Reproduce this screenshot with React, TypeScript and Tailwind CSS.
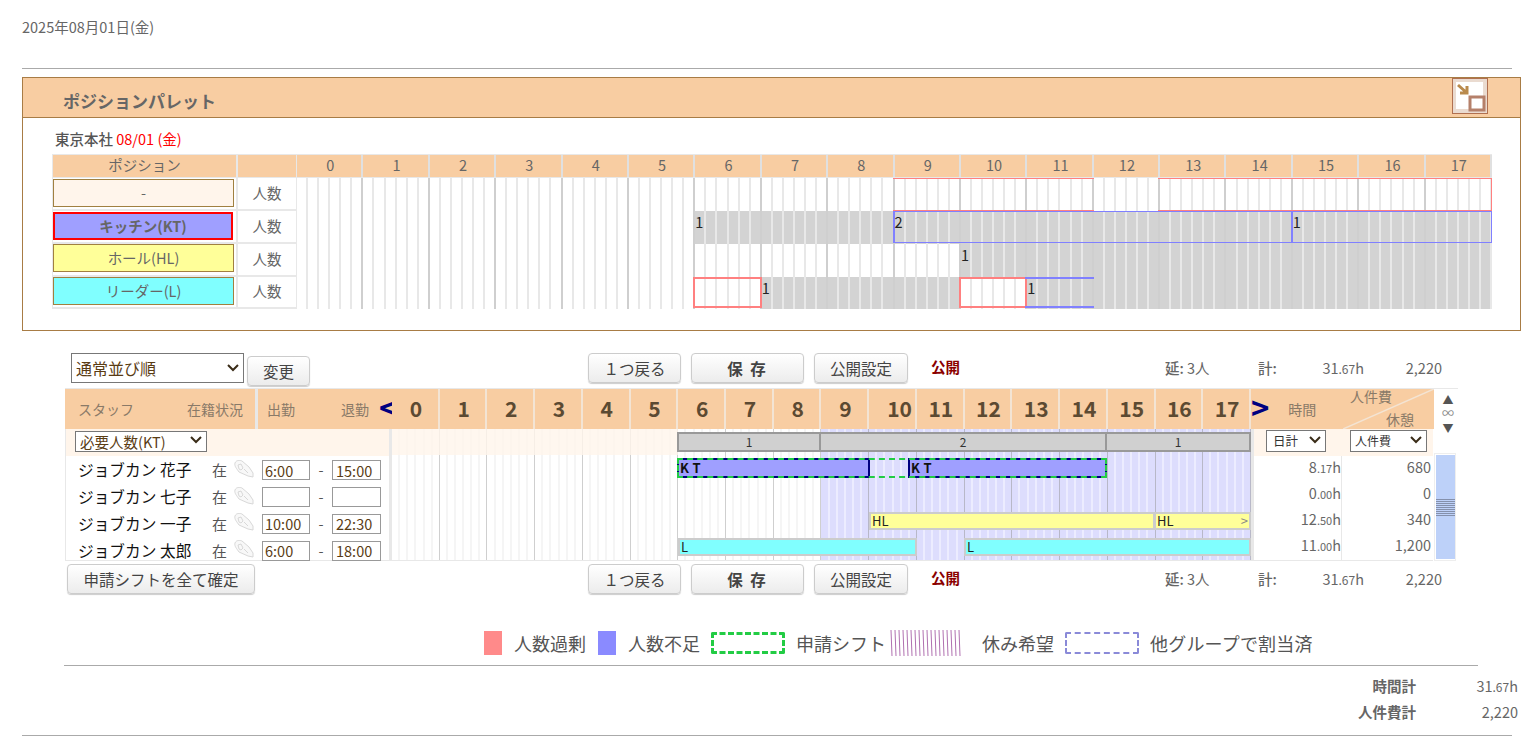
import type { ReactNode } from "react";

const hours = Array.from({ length: 18 }, (_, i) => i);
const slots = [0, 1, 2, 3, 4];

type PaletteCell = {
  gray?: boolean;
  line?: "red" | "blue" | "box" | "blueThick";
  left?: boolean;
  right?: boolean;
  n?: string;
};

const blank: PaletteCell = {};
const gray: PaletteCell = { gray: true };
const redLine: PaletteCell = { line: "red" };
const blueGray: PaletteCell = { gray: true, line: "blue" };

const paletteRows: { label: string; cls: string; cells: PaletteCell[] }[] = [
  {
    label: "-",
    cls: "mt-[1px] w-[181px] bg-[#fff5eb] border border-[#a08040] font-normal",
    cells: [
      ...Array(9).fill(blank),
      redLine,
      redLine,
      redLine,
      blank,
      redLine,
      redLine,
      redLine,
      redLine,
      { line: "red", right: true },
    ],
  },
  {
    label: "キッチン(KT)",
    cls: "mt-[1px] w-[180px] bg-[#9f9fff] border-2 border-[#ff0000] font-bold",
    cells: [
      ...Array(6).fill(blank),
      { gray: true, n: "1" },
      gray,
      gray,
      { gray: true, line: "blue", left: true, n: "2" },
      blueGray,
      blueGray,
      blueGray,
      blueGray,
      blueGray,
      { gray: true, line: "blue", left: true, n: "1" },
      blueGray,
      { gray: true, line: "blue", right: true },
    ],
  },
  {
    label: "ホール(HL)",
    cls: "w-[181px] bg-[#ffff99] border border-[#a08040] font-normal",
    cells: [...Array(10).fill(blank), { gray: true, n: "1" }, ...Array(7).fill(gray)],
  },
  {
    label: "リーダー(L)",
    cls: "w-[181px] bg-[#80ffff] border border-[#a08040] font-normal",
    cells: [
      ...Array(6).fill(blank),
      { line: "box" },
      { gray: true, n: "1" },
      gray,
      gray,
      { line: "box" },
      { gray: true, line: "blueThick", n: "1" },
      ...Array(6).fill(gray),
    ],
  },
];

const staff = [
  { name: "ジョブカン 花子", start: "6:00", end: "15:00", h: "8", m: ".17", cost: "680" },
  { name: "ジョブカン 七子", start: "", end: "", h: "0", m: ".00", cost: "0" },
  { name: "ジョブカン 一子", start: "10:00", end: "22:30", h: "12", m: ".50", cost: "340" },
  { name: "ジョブカン 太郎", start: "6:00", end: "18:00", h: "11", m: ".00", cost: "1,200" },
];

function Hand() {
  return (
    <svg width="20" height="18" viewBox="0 0 20 18" className="mb-[3px] ml-[7px] shrink-0" fill="#f8f8f8" stroke="#d8d8d8" strokeWidth="1">
      <path d="M1 3 C2 0 6 0 8 1 L15 7 L19 13 L19 17 L14 16 L5 12 C3 9 0 6 1 3Z" />
      <path d="M4 5 L7 4 L9 8 L7 10 L5 9 Z M10 9 L14 13" fill="none" />
    </svg>
  );
}

function Select({ label, cls, textCls }: { label: string; cls: string; textCls: string }) {
  return (
    <div className={`relative shrink-0 ${cls}`}>
      <select className={`h-full w-full appearance-none border border-[#777] bg-white ${textCls}`} defaultValue={label}>
        <option value={label}>{label}</option>
      </select>
      <svg width="12" height="8" viewBox="0 0 12 8" className="pointer-events-none absolute right-[5px] top-1/2 -mt-[4px]" fill="none" stroke="#3a2c18" strokeWidth="2">
        <path d="M1 1 L6 6 L11 1" />
      </svg>
    </div>
  );
}

function PaletteHour({ cell, hour }: { cell: PaletteCell; hour: number }) {
  return (
    <div className={`relative flex flex-1 ${cell.gray ? "bg-[#d3d3d3]" : "bg-white"}`}>
      {slots.map((s) => (
        <div key={s} className="flex-1 border-r-2 border-[#e8e8e8]" />
      ))}
      <div className={`flex-1 border-r-2 ${hour === 17 ? "border-[#e8e8e8]" : "border-[#cfcfcf]"}`} />
      {cell.line === "red" && (
        <div className={`absolute -left-[2px] right-0 inset-y-0 border-y border-[#ff8080] ${cell.right ? "border-r" : ""}`} />
      )}
      {cell.line === "blue" && (
        <div className={`absolute -left-[2px] right-0 top-0 bottom-px border-y border-[#8080ff] ${cell.left ? "border-l-2" : ""} ${cell.right ? "border-r" : ""}`} />
      )}
      {cell.line === "blueThick" && <div className="absolute -left-[2px] right-0 top-0 bottom-px border-y-2 border-[#8080ff]" />}
      {cell.line === "box" && <div className="absolute -left-[2px] right-0 top-0 bottom-px border-2 border-[#ff8080]" />}
      {cell.n && (
        <span className="absolute left-0 top-[1px] text-[14.5px] leading-[20px] text-[#222]">{cell.n}</span>
      )}
    </div>
  );
}

function Palette() {
  return (
    <div className="mt-[8px] h-[254px] w-[1499px] border border-[#a87c45]">
      <div className="flex h-[40px] items-center justify-between border-b border-[#a87c45] bg-[#f8cda2] pl-[40px] pr-[32px]">
        <span className="pt-[6px] text-[17px] font-bold text-[#666]">ポジションパレット</span>
        <button className="mb-[3px] h-[36px] w-[36px]">
          <svg width="36" height="36" viewBox="0 0 36 36">
            <rect x="0.5" y="0.5" width="35" height="35" fill="#eadbd0" stroke="#b07050" />
            <rect x="4" y="4" width="27" height="27" fill="#fff" />
            <rect x="18" y="19" width="14" height="13" fill="#fff" stroke="#b5806a" strokeWidth="3" />
            <path d="M6 7 L15 15 M15 8 V15 H8" fill="none" stroke="#b98a4c" strokeWidth="3" />
          </svg>
        </button>
      </div>
      <div className="pl-[29px] pt-[11px]">
        <div className="ml-[3px] h-[25px] text-[14.5px] leading-[20px] font-medium text-[#555]">
          東京本社 <span className="font-normal text-[#ff0000]">08/01 (金)</span>
        </div>
        <div className="w-[1440px]">
          <div className="flex h-[24px] border-y border-[#e8e8e8] text-[14.5px] leading-[20px] text-[#666]">
            <div className="w-[185px] border-x border-[#e8e8e8] bg-[#f8cda2] text-center">ポジション</div>
            <div className="w-[60px] border-x border-[#e8e8e8] bg-[#f8cda2]" />
            {hours.map((h) => (
              <div key={h} className="flex-1 border-r-2 border-[#e0e0e0] bg-[#f8cda2] pl-[2px] text-center">
                {h}
              </div>
            ))}
          </div>
          {paletteRows.map((row, i) => (
            <div key={row.label} className={`flex ${i === 3 ? "h-[32px]" : "h-[33px]"}`}>
              <div className="w-[185px] border-x border-b-2 border-[#e8e8e8]">
                <div className={`flex h-[28px] items-center justify-center text-[14.5px] text-[#666] ${row.cls}`}>
                  {row.label}
                </div>
              </div>
              <div className="flex w-[60px] items-center justify-center border-x border-b-2 border-[#e8e8e8] pb-[2px] text-[14.5px] text-[#666]">
                人数
              </div>
              {row.cells.map((cell, h) => (
                <PaletteHour key={h} cell={cell} hour={h} />
              ))}
            </div>
          ))}
        </div>
      </div>
    </div>
  );
}

function Btn({ children, cls }: { children: ReactNode; cls: string }) {
  return (
    <button className={`h-[30px] shrink-0 rounded-[4px] border border-[#ccc] bg-gradient-to-b from-white to-[#ececec] text-[15.5px] leading-[28px] text-[#444] shadow-[0_1px_1px_rgba(0,0,0,0.2)] ${cls}`}>
      {children}
    </button>
  );
}

function Toolbar({ left }: { left: ReactNode }) {
  return (
    <div className="flex h-[31px] items-start text-[14.5px] text-[#666]">
      <div className="flex w-[524px] shrink-0 items-start">{left}</div>
      <Btn cls="w-[93px]">１つ戻る</Btn>
      <Btn cls="ml-[10px] w-[113px] font-bold tracking-[2px]">保 存</Btn>
      <Btn cls="ml-[10px] w-[94px]">公開設定</Btn>
      <span className="ml-[23px] w-[29px] text-[14.5px] leading-[28px] font-bold whitespace-nowrap text-[#8b0000]">公開</span>
      <span className="ml-[205px] w-[93px] leading-[30px]">
        <b className="font-medium">延:</b> 3人
      </span>
      <b className="w-[40px] leading-[30px] font-medium">計:</b>
      <span className="w-[66px] text-right leading-[30px]">
        31<span className="text-[12px]">.67</span>h
      </span>
      <span className="w-[78px] text-right leading-[30px]">2,220</span>
    </div>
  );
}

function GanttHour({ hour }: { hour: number }) {
  const late = hour >= 9;
  const sub = late ? "border-[#ececff]" : "border-[#f5f5f5]";
  return (
    <div className={`flex flex-1 border-r ${late ? "border-[#b8b8c8] bg-[#ddddfd]" : "border-[#cfcfcf] bg-white"}`}>
      {slots.map((s) => (
        <div key={s} className={`flex-1 border-r-2 ${sub}`} />
      ))}
      <div className="flex-1" />
    </div>
  );
}

function Gantt() {
  return (
    <div className="relative flex h-[131px] w-[859px] shrink-0">
      {hours.map((h) => (
        <GanttHour key={h} hour={h} />
      ))}
      <div className="absolute left-0 top-0 h-[26px] w-[286px] bg-[#fff5eb] opacity-80" />

      {/* required count */}
      <div className="absolute left-[285px] top-[3px] h-[20px] w-[144px] border-2 border-[#999] bg-[#d0d0d0] text-center text-[12px] leading-[15px] text-[#333]">1</div>
      <div className="absolute left-[429px] top-[3px] h-[20px] w-[286px] border-2 border-l-0 border-[#999] bg-[#d0d0d0] text-center text-[12px] leading-[15px] text-[#333]">2</div>
      <div className="absolute left-[715px] top-[3px] h-[20px] w-[144px] border-2 border-l-0 border-[#999] bg-[#d0d0d0] text-center text-[12px] leading-[15px] text-[#333]">1</div>

      {/* KT shifts */}
      <div className="absolute left-[285px] top-[29px] h-[20px] w-[193px] border-2 border-[#000080] bg-[#9f9fff] pl-[1px] text-[13px] leading-[16px] font-bold tracking-[4px] text-[#111]">KT</div>
      <div className="absolute left-[516px] top-[29px] h-[20px] w-[199px] border-2 border-[#000080] bg-[#9f9fff] pl-[1px] text-[13px] leading-[16px] font-bold tracking-[4px] text-[#111]">KT</div>
      <div className="absolute left-[285px] top-[29px] h-[20px] w-[430px] border-2 border-dashed border-[#22cc44]" />

      {/* HL shifts */}
      <div className="absolute left-[477px] top-[83px] h-[18px] w-[286px] border-2 border-[#ccc] bg-[#ffff99] pl-[1px] text-[13px] leading-[14px] text-[#222]">HL</div>
      <div className="absolute left-[763px] top-[83px] flex h-[18px] w-[96px] justify-between border-2 border-l border-[#ccc] bg-[#ffff99] px-[1px] text-[13px] leading-[14px] text-[#222]">
        HL<span className="text-[#888]">&gt;</span>
      </div>

      {/* L shifts */}
      <div className="absolute left-[286px] top-[109px] h-[18px] w-[239px] border-2 border-[#ccc] bg-[#80ffff] pl-[1px] text-[13px] leading-[14px] text-[#222]">L</div>
      <div className="absolute left-[572px] top-[109px] h-[18px] w-[287px] border-2 border-[#ccc] bg-[#80ffff] pl-[1px] text-[13px] leading-[14px] text-[#222]">L</div>
    </div>
  );
}

function ShiftTable() {
  return (
    <div className="ml-[1px] w-[1393px]">
      <div className="mt-[4px] flex h-[41px] border-t border-[#e8e8e8] text-[14px] text-[#8a7a68]">
        <div className="flex w-[190px] shrink-0 items-center justify-between bg-[#f8cda2] pl-[13px] pr-[12px]">
          <span>スタッフ</span>
          <span>在籍状況</span>
        </div>
        <div className="w-[3px] shrink-0 bg-[#e8e8e8]" />
        <div className="flex w-[134px] shrink-0 items-center whitespace-nowrap bg-[#f8cda2] pl-[9px]">
          <span>出勤</span>
          <span className="ml-[46px]">退勤</span>
          <span className="ml-[10px] pb-[5px] text-[31px] leading-none font-bold text-[#000080]">&lt;</span>
        </div>
        <div className="flex w-[859px] shrink-0 bg-[#f8cda2]">
          {hours.map((h) => (
            <div key={h} className={`w-[47.72px] flex-none border-r-2 border-[#f3e4d4] text-center text-[21px] leading-[38px] font-bold text-[#5c4a32] ${h === 10 ? "pl-[15px]" : "pl-[2px]"}`}>
              {h}
            </div>
          ))}
        </div>
        <div className="flex w-[92px] shrink-0 items-center bg-[#f8cda2]">
          <span className="pb-[5px] text-[31px] leading-none font-bold text-[#000080]">&gt;</span>
          <span className="ml-[19px]">時間</span>
        </div>
        <div className="relative w-[91px] shrink-0 bg-[#f8cda2]">
          <svg className="absolute inset-0" width="91" height="40" viewBox="0 0 91 40">
            <line x1="0" y1="40" x2="91" y2="0" stroke="#f3e4d4" strokeWidth="1.5" />
          </svg>
          <span className="absolute left-[7px] top-[-3px]">人件費</span>
          <span className="absolute right-[20px] top-[20px]">休憩</span>
        </div>
        <div className="relative z-10 ml-[2px] flex w-[24px] shrink-0 flex-col items-center text-[#555]">
          <span className="mt-[3px] text-[11px] leading-[14px]">▲</span>
          <span className="text-[12px] leading-[14px] text-[#888]">∞</span>
          <span className="text-[11px] leading-[16px]">▼</span>
        </div>
      </div>

      <div className="flex">
        <div className="flex h-[132px] w-[1368px] border-b border-[#e8e8e8]">
          <div className="h-[131px] w-[324px] shrink-0 border-l border-[#e8e8e8]">
            <div className="h-[27px] bg-[#fff5eb] pl-[9px]">
              <Select label="必要人数(KT)" cls="h-[21px] w-[132px]" textCls="pl-[4px] text-[14.5px] leading-[19px] text-[#5a3c14]" />
            </div>
            <div className="pt-[1px]">
              {staff.map((s) => (
                <div key={s.name} className="flex h-[26.75px] items-center pl-[12px] text-[15.7px] leading-[20px] text-[#111]">
                  <span className="w-[134px] shrink-0 whitespace-nowrap">{s.name}</span>
                  <span className="text-[15px] text-[#555]">在</span>
                  <Hand />
                  <input readOnly value={s.start} className="ml-[8px] h-[20px] w-[48px] border border-[#999] bg-white px-[2px] text-[14.5px] leading-[18px] text-[#5a3c14]" />
                  <span className="w-[22px] text-center text-[14.5px] text-[#555]">-</span>
                  <input readOnly value={s.end} className="h-[20px] w-[49px] border border-[#999] bg-white px-[3px] text-[14.5px] leading-[18px] text-[#5a3c14]" />
                </div>
              ))}
            </div>
          </div>
          <div className="w-[3px] shrink-0 bg-[#e8e8e8]" />
          <Gantt />
          <div className="w-[3px] shrink-0 bg-[#e8e8e8]" />
          <div className="w-[179px] text-[14.5px] text-[#666]">
            <div className="flex h-[27px] bg-[#fff5eb] pl-[12px]">
              <Select label="日計" cls="h-[22px] w-[60px]" textCls="pl-[6px] text-[12.5px] text-[#333]" />
              <Select label="人件費" cls="ml-[24px] h-[22px] w-[77px]" textCls="pl-[4px] text-[12px] text-[#333]" />
            </div>
            {staff.map((s) => (
              <div key={s.name} className="flex h-[26px] text-right">
                <span className="h-full w-[88px] border-r border-[#e8e8e8] leading-[22px]">
                  {s.h}
                  <span className="text-[11px]">{s.m}</span>h
                </span>
                <span className="h-full w-[89px] leading-[22px]">{s.cost}</span>
              </div>
            ))}
          </div>
        </div>
        <div className="ml-[1px] mt-[24px] h-[108px] w-[22px] border border-[#eee] p-[1px]">
          <div className="flex h-full w-[19px] flex-col justify-center bg-[#bdd1f9]">
            <div className="h-[18px] bg-[repeating-linear-gradient(0deg,#8490ac_0_1px,#bdd1f9_1px_2px)]" />
          </div>
        </div>
      </div>
    </div>
  );
}

function Stripes() {
  return (
    <svg width="72" height="26" viewBox="0 0 72 26" className="shrink-0">
      {Array.from({ length: 18 }, (_, i) => (
        <line key={i} x1={1 + i * 4} y1="0" x2={2 + i * 4} y2="26" stroke="#b070b0" strokeWidth="1" />
      ))}
    </svg>
  );
}

function Legend() {
  return (
    <div className="ml-[462px] mt-[35px] flex h-[26px] items-center text-[18px] text-[#555]">
      <div className="h-[24px] w-[18px] bg-[#ff8a8a]" />
      <span className="ml-[12px]">人数過剰</span>
      <div className="ml-[12px] h-[24px] w-[18px] bg-[#8a8aff]" />
      <span className="ml-[12px]">人数不足</span>
      <div className="ml-[11px] h-[22px] w-[74px] rounded-[2px] border-[3px] border-dashed border-[#22cc44]" />
      <span className="ml-[11px]">申請シフト</span>
      <div className="ml-[4px] flex">
        <Stripes />
      </div>
      <span className="ml-[20px]">休み希望</span>
      <div className="ml-[11px] h-[22px] w-[74px] rounded-[2px] border-2 border-dashed border-[#8a8ad8]" />
      <span className="ml-[11px] tracking-[0.2px]">他グループで割当済</span>
    </div>
  );
}

export default function App() {
  return (
    <div className="h-[745px] w-[1534px] overflow-hidden bg-white px-[22px] pt-[17px] font-['Noto_Sans_CJK_JP','Noto_Sans',sans-serif] text-[#555]">
      <div className="h-[20px] text-[14.5px] leading-[20px] text-[#666]">2025年08月01日(金)</div>
      <div className="mt-[31px] h-px bg-[#aaa]" />
      <Palette />
      <div className="ml-[42px] mt-[22px]">
        <Toolbar
          left={
            <>
              <Select label="通常並び順" cls="ml-[7px] h-[30px] w-[173px]" textCls="pl-[4px] text-[16px] text-[#5a3c14]" />
              <Btn cls="ml-[3px] mt-[3px] w-[63px]">変更</Btn>
            </>
          }
        />
        <ShiftTable />
        <div className="mt-[3px]">
          <Toolbar left={<Btn cls="ml-[3px] w-[188px]">申請シフトを全て確定</Btn>} />
        </div>
      </div>
      <Legend />
      <div className="ml-[42px] mt-[9px] h-px w-[1414px] bg-[#aaa]" />
      <div className="mt-[7px] flex h-[26px] items-center justify-end text-[14.5px] text-[#666]">
        <b className="font-bold">時間計</b>
        <span className="mr-[-6px] w-[102px] text-right whitespace-nowrap">
          31<span className="text-[12px]">.67</span>h
        </span>
      </div>
      <div className="flex h-[26px] items-center justify-end text-[14.5px] text-[#666]">
        <b className="font-bold">人件費計</b>
        <span className="mr-[-6px] w-[102px] text-right">2,220</span>
      </div>
      <div className="mt-[10px] h-px bg-[#aaa]" />
    </div>
  );
}
